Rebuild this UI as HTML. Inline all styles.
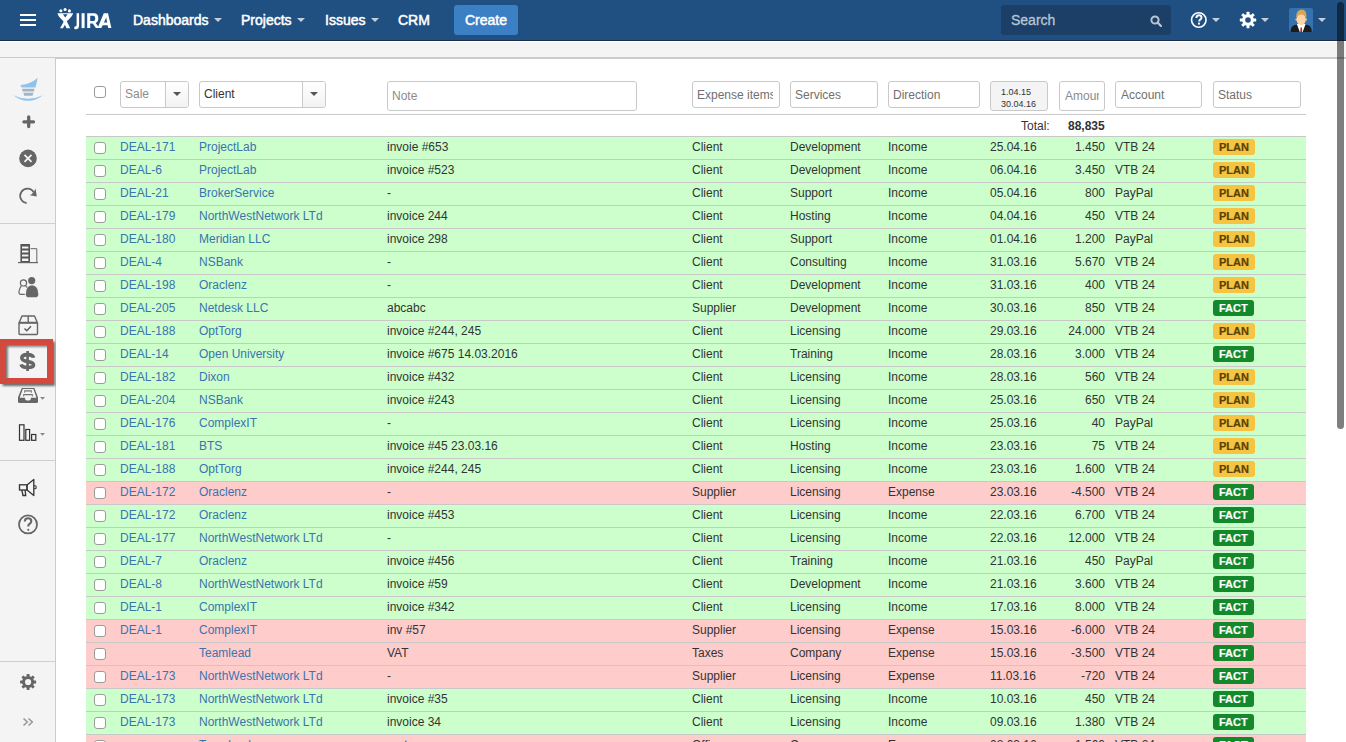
<!DOCTYPE html>
<html><head><meta charset="utf-8"><style>
*{margin:0;padding:0;box-sizing:border-box}
html,body{width:1346px;height:742px;overflow:hidden;background:#fff;font-family:"Liberation Sans",sans-serif;font-size:12px;color:#333}
#hdr{position:absolute;left:0;top:0;width:1346px;height:41px;background:#205081;border-bottom:1px solid #1a2e4a}
#hdr .nav{position:absolute;top:0;height:40px;line-height:40px;color:#fff;font-size:14px;-webkit-text-stroke:0.5px #fff;white-space:nowrap}
#hdr .arr{position:absolute;top:18px;width:0;height:0;border-left:4px solid transparent;border-right:4px solid transparent;border-top:4px solid #c5cfdc}
#create{position:absolute;left:454px;top:5px;width:64px;height:30px;background:#3b7fc4;border-radius:3px;color:#fff;font-size:14px;-webkit-text-stroke:0.5px #fff;line-height:30px;text-align:center}
#search{position:absolute;left:1001px;top:5px;width:170px;height:30px;background:#1c3f67;border-radius:3px}
#search span{position:absolute;left:10px;top:0;line-height:30px;font-size:14px;color:#b9c5d4;-webkit-text-stroke:0.3px #b9c5d4}
#band{position:absolute;left:0;top:41px;width:1346px;height:17px;background:#f4f4f4;border-top:1px solid #fff;border-bottom:1px solid #cbcbcb}
#side{position:absolute;left:0;top:58px;width:56px;height:684px;background:#f4f4f4;border-right:1px solid #cbcbcb}
#side .dv{position:absolute;left:0;width:55px;height:1px;background:#cfcfcf}
#content{position:absolute;left:56px;top:58px;width:1290px;height:684px;background:#fff;border-top:1px solid #cbcbcb}
#content > *{position:absolute}
.cb{display:block;position:absolute;left:8px;top:5px;width:12px;height:12px;border:1px solid #9b9b9b;border-radius:3px;background:#fff}
.hcb{left:38px;top:27px}
.sel,.inp{position:absolute;top:22px;height:27px;border:1px solid #c9c9c9;border-radius:3px;background:#fff;overflow:hidden}
.sel .ph,.inp .ph,.inp .ph2,.sel .val{position:absolute;left:4px;top:5px;font-size:12px;line-height:14px;color:#8c8c8c;white-space:nowrap}
.inp .ph2{top:6px}
.sel .val{color:#333}
.inp .ph2{color:#707070}
.dd{position:absolute;top:0;right:0;bottom:0;border-left:1px solid #c9c9c9;background:linear-gradient(#fff,#f2f2f2)}
.dd i{position:absolute;left:50%;top:10px;margin-left:-4px;width:0;height:0;border-left:4px solid transparent;border-right:4px solid transparent;border-top:4px solid #555}
.date{background:#f4f4f4}
.date span{position:absolute;left:10px;top:4px;font-size:9px;line-height:12px;color:#333}
.fline{left:30px;top:55px;width:1220px;height:1px;background:#c9c9c9}
.tot{left:965px;top:60px;font-size:12px;line-height:14px}
.totv{left:1012px;top:60px;font-size:12px;line-height:14px;font-weight:bold}
.row{position:absolute;left:30px;width:1220px;height:23px;border-top:1px solid #c8c8c8;white-space:nowrap}
.row.g{background:#ccffcc}
.row.r{background:#ffcccc}
.row > a,.row > span{position:absolute;top:0;line-height:20px;font-size:12px}
.row a{color:#3b73af}
.c1{left:34px}.c2{left:113px}.c3{left:301px}.c4{left:606px}.c5{left:704px}.c6{left:802px}.c7{left:904px}
.c8{right:201px;text-align:right}.c9{left:1029px}
.row .lz{position:absolute;left:1127px;top:2px;height:16px;padding:0 6px;border-radius:3px;font-size:11px;font-weight:bold;line-height:16px}
.plan{background:#f6c342;color:#594300;-webkit-text-stroke:0.2px #594300}
.fact{background:#14892c;color:#fff;-webkit-text-stroke:0.2px #fff}
#sb{position:absolute;left:1337px;top:2px;width:7px;height:427px;border-radius:4px;background:rgba(0,0,0,0.5)}

</style></head><body>
<div id="hdr">
<svg style="position:absolute;left:20px;top:14px" width="16" height="12"><rect x="0" y="0" width="16" height="2" fill="#fff"/><rect x="0" y="5" width="16" height="2" fill="#fff"/><rect x="0" y="10" width="16" height="2" fill="#fff"/></svg>
<svg style="position:absolute;left:54px;top:4px" width="62" height="30" viewBox="0 0 62 30">
<g fill="#fff">
<circle cx="6.9" cy="6.8" r="1.55"/><circle cx="11.1" cy="5.5" r="1.55"/><circle cx="15.4" cy="6.9" r="1.55"/>
<path fill-rule="evenodd" d="M3.4 9.3 H19.2 Q18.5 12 15.5 14.8 L11.8 18.2 H10.6 L6.9 14.8 Q3.9 12 3.4 9.3 Z M8.9 10.2 H13.6 L11.25 13.6 Z"/>
<path d="M9.3 16.5 L12.4 16.5 L16.2 24.2 H12.6 L10 19.2 Z"/>
<path d="M13.1 16.5 L10.3 16.8 L6 24.2 H8.9 L11.5 19.8 Z"/>
<path d="M22.6 9.2 H25.1 V21.2 Q25.1 25 21.6 25.2 L20.3 25.1 L20.5 22.6 Q22.6 22.8 22.6 21 Z"/>
<rect x="27.6" y="9.2" width="3" height="14.9"/>
<path fill-rule="evenodd" d="M33.2 9.2 H39.8 Q44.3 9.2 44.3 14.2 Q44.3 17.9 41.6 19 L45.4 24.1 H41.9 L38.7 19.5 H36.2 V24.1 H33.2 Z M36.2 11.8 V17 H39.4 Q41.3 17 41.3 14.4 Q41.3 11.8 39.4 11.8 Z"/>
<path fill-rule="evenodd" d="M49.8 9.2 H54 L57.4 24.1 H54.2 L53.6 21.2 H48.7 L47.3 24.1 H43.6 Z M50 18.6 H53.1 L52.2 13.6 Z"/>
</g></svg>
<div class="nav" style="left:133px">Dashboards</div><i class="arr" style="left:214px"></i>
<div class="nav" style="left:241px">Projects</div><i class="arr" style="left:297px"></i>
<div class="nav" style="left:325px">Issues</div><i class="arr" style="left:371px"></i>
<div class="nav" style="left:398px">CRM</div>
<div id="create">Create</div>
<div id="search"><span>Search</span>
<svg style="position:absolute;left:149px;top:10px" width="12" height="12" viewBox="0 0 12 12"><circle cx="5" cy="5" r="3.6" fill="none" stroke="#b9c5d4" stroke-width="2"/><path d="M7.5 7.5 L11 11" stroke="#b9c5d4" stroke-width="2.2" stroke-linecap="round"/></svg>
</div>
<svg style="position:absolute;left:1190px;top:11px" width="18" height="18" viewBox="0 0 18 18"><circle cx="8.8" cy="9" r="7.25" fill="none" stroke="#fff" stroke-width="1.6"/><path d="M6.4 7 q0 -2.8 2.5 -2.8 q2.6 0 2.6 2.4 q0 1.4 -1.3 2.1 q-0.9 0.5 -0.9 1.4 v0.3" fill="none" stroke="#fff" stroke-width="1.9"/><rect x="8" y="11.6" width="1.9" height="2" fill="#fff"/></svg>
<i class="arr" style="left:1212px"></i>
<svg style="position:absolute;left:1239px;top:11px" width="18" height="18" viewBox="0 0 18 18"><g transform="translate(9,9)" fill="#fff"><circle r="4.35" fill="none" stroke="#fff" stroke-width="3.1"/><rect x="-1.45" y="-8.2" width="2.9" height="4.2" rx="0.5" transform="rotate(0)"/><rect x="-1.45" y="-8.2" width="2.9" height="4.2" rx="0.5" transform="rotate(45)"/><rect x="-1.45" y="-8.2" width="2.9" height="4.2" rx="0.5" transform="rotate(90)"/><rect x="-1.45" y="-8.2" width="2.9" height="4.2" rx="0.5" transform="rotate(135)"/><rect x="-1.45" y="-8.2" width="2.9" height="4.2" rx="0.5" transform="rotate(180)"/><rect x="-1.45" y="-8.2" width="2.9" height="4.2" rx="0.5" transform="rotate(225)"/><rect x="-1.45" y="-8.2" width="2.9" height="4.2" rx="0.5" transform="rotate(270)"/><rect x="-1.45" y="-8.2" width="2.9" height="4.2" rx="0.5" transform="rotate(315)"/></g></svg>
<i class="arr" style="left:1261px"></i>
<svg style="position:absolute;left:1289px;top:8px" width="24" height="24" viewBox="0 0 24 24">
<rect x="0" y="0" width="24" height="24" rx="2" fill="#3572b0"/>
<path d="M9.6 13.5 H14.8 V17 H9.6 Z" fill="#eab47e"/>
<path d="M1.6 24 Q1.6 18.3 5.2 17.2 L9.3 16 H15.1 L19.2 17.2 Q22.8 18.3 22.8 24 Z" fill="#1c1c1c"/>
<path d="M7.8 16 H16.6 L13.6 24 H10.8 Z" fill="#fff"/>
<path d="M11.5 19.6 H12.9 L13.1 24 H11.3 Z" fill="#b51919"/>
<circle cx="7.4" cy="11.6" r="1.1" fill="#f3c08a"/><circle cx="17" cy="11.6" r="1.1" fill="#f3c08a"/>
<ellipse cx="12.2" cy="11.4" rx="4.6" ry="5.7" fill="#fcd6a6"/>
<path d="M7.4 10.8 Q6.6 4.2 9.8 2.4 Q12.4 0.7 15 1.9 Q18.2 3.5 17.1 10.8 Q16.6 6.8 12.3 6.6 Q8 6.8 7.4 10.8 Z" fill="#d8a457"/>
</svg>
<i class="arr" style="left:1318px"></i>
</div>

<div id="band"></div>
<div id="side"></div>
<svg id="sideicons" style="position:absolute;left:0;top:0" width="56" height="742" viewBox="0 0 56 742">
<!-- logo -->
<path d="M20.5 85 Q31 84 37.8 77.8 L35.5 87.5 L21.5 87.5 Z" fill="#8ec3ee"/>
<path d="M22 88.8 h12.5 l-0.6 2.8 h-11.3 z" fill="#a0b4c8"/>
<path d="M23.3 92.8 h10.2 l-1 3 h-8.2 z" fill="#a0b4c8"/>
<path d="M13.3 95.2 Q28 106.3 43 95.2 Q28 102.3 13.3 95.2 Z" fill="#8ec3ee"/>
<!-- plus -->
<path d="M28.7 117 v9.6 M23.9 121.8 h9.6" stroke="#666" stroke-width="3.3" stroke-linecap="round"/>
<!-- x circle -->
<circle cx="28" cy="158.4" r="8.8" fill="#666"/>
<path d="M24.5 154.9 l7 7 M31.5 154.9 l-7 7" stroke="#f4f4f4" stroke-width="1.8"/>
<!-- refresh -->
<path d="M26.6 203 A7.2 7.2 0 1 1 33.6 192.2" fill="none" stroke="#666" stroke-width="1.8"/>
<path d="M29.8 195.3 Q33.6 193.8 35.5 188.6 L36.8 196.6 Z" fill="#666"/>
<!-- dividers -->
<rect x="0" y="223" width="55" height="1" fill="#cfcfcf"/>
<rect x="0" y="460" width="55" height="1" fill="#cfcfcf"/>
<rect x="0" y="661" width="55" height="1" fill="#cfcfcf"/>
<!-- building -->
<rect x="20.4" y="244" width="9.6" height="18.5" fill="#555"/>
<rect x="22" y="246.5" width="6.4" height="2" fill="#f4f4f4"/>
<rect x="22" y="250.5" width="6.4" height="2" fill="#f4f4f4"/>
<rect x="22" y="254.5" width="6.4" height="2" fill="#f4f4f4"/>
<rect x="22" y="258.5" width="6.4" height="2.5" fill="#f4f4f4"/>
<path d="M30.5 248.7 h6.3 v13.5" fill="none" stroke="#666" stroke-width="1"/>
<rect x="18" y="262" width="20" height="1.2" fill="#666"/>
<!-- persons -->
<circle cx="23.5" cy="282.9" r="3.1" fill="none" stroke="#666" stroke-width="1.2"/>
<path d="M21.2 286.2 Q19.6 288.4 19 291.3 Q18.6 294.3 21 294.3 H24.8" fill="none" stroke="#666" stroke-width="1.2"/>
<path d="M25.8 286 Q26.3 286.9 27.3 287.4" fill="none" stroke="#666" stroke-width="1.2"/>
<circle cx="31.7" cy="280.6" r="3.6" fill="#666"/>
<path d="M25.8 294.2 Q25.9 285.6 32 285.2 Q38.2 285.6 38.3 294.2 Q38.3 297.3 35.4 297.3 H28.7 Q25.8 297.3 25.8 294.2 Z" fill="#666"/>
<!-- box -->
<path d="M19 323 L22 316 H34.5 L37.5 323 Z M28.2 316 V323" fill="none" stroke="#666" stroke-width="1.4" stroke-linejoin="round"/>
<rect x="19" y="322.5" width="18.5" height="12" rx="1" fill="none" stroke="#666" stroke-width="1.4"/>
<path d="M24.5 328.5 l2.3 2.3 l4.2 -4.5" fill="none" stroke="#555" stroke-width="1.3"/>
<!-- highlight -->
<defs><filter id="sh" x="-20%" y="-20%" width="150%" height="150%"><feGaussianBlur stdDeviation="1.1"/></filter>
<filter id="sh2" x="-20%" y="-20%" width="150%" height="150%"><feGaussianBlur stdDeviation="0.8"/></filter></defs>
<rect x="2.5" y="341.5" width="52.5" height="44.5" fill="#555" opacity="0.85" filter="url(#sh)"/>
<rect x="0" y="339" width="53" height="45" fill="#d24a3d"/>
<rect x="6" y="345" width="41" height="33" fill="#f4f4f4"/>
<clipPath id="inr"><rect x="6" y="345" width="41" height="33"/></clipPath>
<g clip-path="url(#inr)"><path d="M3 342 h46 v4.8 h-41.2 v34 h-4.8 z" fill="#666" opacity="0.9" filter="url(#sh2)"/></g>
<path d="M33.5 357.8 C33.1 355.6 31 354.6 27.6 354.6 C24.1 354.6 21.8 355.9 21.8 358.1 C21.8 360.5 24.6 361.1 27.6 361.6 C30.8 362.1 33.5 362.8 33.5 364.9 C33.5 366.9 31.2 367.4 27.6 367.4 C23.9 367.4 21.6 366.4 21.2 364.3" fill="none" stroke="#666" stroke-width="3.6"/>
<rect x="26.3" y="351" width="2.6" height="20" fill="#666"/>
<!-- tray -->
<path d="M21.8 388 H34.4 L38 397.3 V401.5 Q38 403 36.5 403 H19.5 Q18 403 18 401.5 V397.3 Z" fill="#666"/>
<path d="M22.8 389.1 H33.4 L36.5 397.8 H30.9 V398.6 Q30.9 400.6 28.9 400.6 H27 Q25 400.6 25 398.6 V397.8 H19.7 Z" fill="#f4f4f4"/>
<path d="M24.2 392.7 V390.3 H31.8 V392.7 H30.9 V391.4 H25.1 V392.7 Z" fill="#707070"/>
<path d="M23.2 396.6 V394 H32.8 V396.6 H31.9 V395.2 H24.1 V396.6 Z" fill="#707070"/>
<path d="M40 397 h5 l-2.5 2.8 z" fill="#888"/>
<!-- bars -->
<rect x="19.5" y="424.8" width="4.5" height="15.5" fill="none" stroke="#333" stroke-width="1.2"/>
<rect x="25.8" y="429.5" width="3.8" height="10.8" fill="none" stroke="#333" stroke-width="1.2"/>
<rect x="31.6" y="434.5" width="4.2" height="5.8" fill="none" stroke="#333" stroke-width="1.2"/>
<path d="M40 433 h5 l-2.5 2.8 z" fill="#888"/>
<!-- megaphone -->
<path d="M27 485 L33.8 479.5 V495.5 L27 490 Z" fill="none" stroke="#333" stroke-width="1.3" stroke-linejoin="round"/>
<rect x="19.5" y="484.8" width="7.5" height="5.2" fill="none" stroke="#333" stroke-width="1.3"/>
<path d="M21.8 490 L23 495.5 H25.7 L25.1 490" fill="none" stroke="#333" stroke-width="1.3"/>
<path d="M34 485.8 h1.3 q0.8 0 0.8 1 v1 q0 1 -0.8 1 h-1.3" fill="none" stroke="#333" stroke-width="1.1"/>
<!-- help -->
<circle cx="28" cy="524.4" r="9" fill="none" stroke="#666" stroke-width="1.8"/>
<path d="M24.8 521.6 q0 -3.3 3.3 -3.3 q3.2 0 3.2 3 q0 1.7 -1.8 2.7 q-1.2 0.7 -1.2 2.1 v0.4" fill="none" stroke="#666" stroke-width="2.1"/>
<circle cx="28.3" cy="529.8" r="1.1" fill="#666"/>
<!-- gear -->
<g transform="translate(28.1,682)" fill="#666"><circle r="4.6" fill="none" stroke="#666" stroke-width="3"/><rect x="-1.45" y="-8.05" width="2.9" height="4" rx="0.5" transform="rotate(0)"/><rect x="-1.45" y="-8.05" width="2.9" height="4" rx="0.5" transform="rotate(45)"/><rect x="-1.45" y="-8.05" width="2.9" height="4" rx="0.5" transform="rotate(90)"/><rect x="-1.45" y="-8.05" width="2.9" height="4" rx="0.5" transform="rotate(135)"/><rect x="-1.45" y="-8.05" width="2.9" height="4" rx="0.5" transform="rotate(180)"/><rect x="-1.45" y="-8.05" width="2.9" height="4" rx="0.5" transform="rotate(225)"/><rect x="-1.45" y="-8.05" width="2.9" height="4" rx="0.5" transform="rotate(270)"/><rect x="-1.45" y="-8.05" width="2.9" height="4" rx="0.5" transform="rotate(315)"/></g>
<!-- chevrons -->
<path d="M23.5 718.5 l3.8 3.5 l-3.8 3.5 M28.5 718.5 l3.8 3.5 l-3.8 3.5" fill="none" stroke="#999" stroke-width="1.6"/>
</svg>

<div id="content">

<i class="cb hcb"></i>
<div class="sel" style="left:64px;width:69px"><span class="ph">Sale</span><b class="dd" style="left:44px"><i></i></b></div>
<div class="sel" style="left:143px;width:127px"><span class="val">Client</span><b class="dd" style="left:102px"><i></i></b></div>
<div class="inp" style="left:331px;width:250px;height:30px"><span class="ph" style="top:7px">Note</span></div>
<div class="inp" style="left:636px;width:88px"><span class="ph2" style="width:76px;overflow:hidden">Expense items</span></div>
<div class="inp" style="left:734px;width:88px"><span class="ph2">Services</span></div>
<div class="inp" style="left:832px;width:92px"><span class="ph2">Direction</span></div>
<div class="inp date" style="left:934px;width:58px;height:30px"><span>1.04.15<br>30.04.16</span></div>
<div class="inp" style="left:1003px;width:46px;height:30px"><span class="ph" style="top:7px;left:5px;width:34px;overflow:hidden">Amount</span></div>
<div class="inp" style="left:1059px;width:87px"><span class="ph2" style="left:5px">Account</span></div>
<div class="inp" style="left:1157px;width:88px"><span class="ph2">Status</span></div>
<div class="fline"></div>
<div class="tot">Total:</div><div class="totv">88,835</div>

<div class="row g" style="top:77px"><i class="cb"></i><a class="c1">DEAL-171</a><a class="c2">ProjectLab</a><span class="c3">invoie #653</span><span class="c4">Client</span><span class="c5">Development</span><span class="c6">Income</span><span class="c7">25.04.16</span><span class="c8">1.450</span><span class="c9">VTB 24</span><span class="lz plan">PLAN</span></div>
<div class="row g" style="top:100px"><i class="cb"></i><a class="c1">DEAL-6</a><a class="c2">ProjectLab</a><span class="c3">invoice #523</span><span class="c4">Client</span><span class="c5">Development</span><span class="c6">Income</span><span class="c7">06.04.16</span><span class="c8">3.450</span><span class="c9">VTB 24</span><span class="lz plan">PLAN</span></div>
<div class="row g" style="top:123px"><i class="cb"></i><a class="c1">DEAL-21</a><a class="c2">BrokerService</a><span class="c3">-</span><span class="c4">Client</span><span class="c5">Support</span><span class="c6">Income</span><span class="c7">05.04.16</span><span class="c8">800</span><span class="c9">PayPal</span><span class="lz plan">PLAN</span></div>
<div class="row g" style="top:146px"><i class="cb"></i><a class="c1">DEAL-179</a><a class="c2">NorthWestNetwork LTd</a><span class="c3">invoice 244</span><span class="c4">Client</span><span class="c5">Hosting</span><span class="c6">Income</span><span class="c7">04.04.16</span><span class="c8">450</span><span class="c9">VTB 24</span><span class="lz plan">PLAN</span></div>
<div class="row g" style="top:169px"><i class="cb"></i><a class="c1">DEAL-180</a><a class="c2">Meridian LLC</a><span class="c3">invoice 298</span><span class="c4">Client</span><span class="c5">Support</span><span class="c6">Income</span><span class="c7">01.04.16</span><span class="c8">1.200</span><span class="c9">PayPal</span><span class="lz plan">PLAN</span></div>
<div class="row g" style="top:192px"><i class="cb"></i><a class="c1">DEAL-4</a><a class="c2">NSBank</a><span class="c3">-</span><span class="c4">Client</span><span class="c5">Consulting</span><span class="c6">Income</span><span class="c7">31.03.16</span><span class="c8">5.670</span><span class="c9">VTB 24</span><span class="lz plan">PLAN</span></div>
<div class="row g" style="top:215px"><i class="cb"></i><a class="c1">DEAL-198</a><a class="c2">Oraclenz</a><span class="c3">-</span><span class="c4">Client</span><span class="c5">Development</span><span class="c6">Income</span><span class="c7">31.03.16</span><span class="c8">400</span><span class="c9">VTB 24</span><span class="lz plan">PLAN</span></div>
<div class="row g" style="top:238px"><i class="cb"></i><a class="c1">DEAL-205</a><a class="c2">Netdesk LLC</a><span class="c3">abcabc</span><span class="c4">Supplier</span><span class="c5">Development</span><span class="c6">Income</span><span class="c7">30.03.16</span><span class="c8">850</span><span class="c9">VTB 24</span><span class="lz fact">FACT</span></div>
<div class="row g" style="top:261px"><i class="cb"></i><a class="c1">DEAL-188</a><a class="c2">OptTorg</a><span class="c3">invoice #244, 245</span><span class="c4">Client</span><span class="c5">Licensing</span><span class="c6">Income</span><span class="c7">29.03.16</span><span class="c8">24.000</span><span class="c9">VTB 24</span><span class="lz plan">PLAN</span></div>
<div class="row g" style="top:284px"><i class="cb"></i><a class="c1">DEAL-14</a><a class="c2">Open University</a><span class="c3">invoice #675 14.03.2016</span><span class="c4">Client</span><span class="c5">Training</span><span class="c6">Income</span><span class="c7">28.03.16</span><span class="c8">3.000</span><span class="c9">VTB 24</span><span class="lz fact">FACT</span></div>
<div class="row g" style="top:307px"><i class="cb"></i><a class="c1">DEAL-182</a><a class="c2">Dixon</a><span class="c3">invoice #432</span><span class="c4">Client</span><span class="c5">Licensing</span><span class="c6">Income</span><span class="c7">28.03.16</span><span class="c8">560</span><span class="c9">VTB 24</span><span class="lz plan">PLAN</span></div>
<div class="row g" style="top:330px"><i class="cb"></i><a class="c1">DEAL-204</a><a class="c2">NSBank</a><span class="c3">invoice #243</span><span class="c4">Client</span><span class="c5">Licensing</span><span class="c6">Income</span><span class="c7">25.03.16</span><span class="c8">650</span><span class="c9">VTB 24</span><span class="lz plan">PLAN</span></div>
<div class="row g" style="top:353px"><i class="cb"></i><a class="c1">DEAL-176</a><a class="c2">ComplexIT</a><span class="c3">-</span><span class="c4">Client</span><span class="c5">Licensing</span><span class="c6">Income</span><span class="c7">25.03.16</span><span class="c8">40</span><span class="c9">PayPal</span><span class="lz plan">PLAN</span></div>
<div class="row g" style="top:376px"><i class="cb"></i><a class="c1">DEAL-181</a><a class="c2">BTS</a><span class="c3">invoice #45 23.03.16</span><span class="c4">Client</span><span class="c5">Hosting</span><span class="c6">Income</span><span class="c7">23.03.16</span><span class="c8">75</span><span class="c9">VTB 24</span><span class="lz plan">PLAN</span></div>
<div class="row g" style="top:399px"><i class="cb"></i><a class="c1">DEAL-188</a><a class="c2">OptTorg</a><span class="c3">invoice #244, 245</span><span class="c4">Client</span><span class="c5">Licensing</span><span class="c6">Income</span><span class="c7">23.03.16</span><span class="c8">1.600</span><span class="c9">VTB 24</span><span class="lz plan">PLAN</span></div>
<div class="row r" style="top:422px"><i class="cb"></i><a class="c1">DEAL-172</a><a class="c2">Oraclenz</a><span class="c3">-</span><span class="c4">Supplier</span><span class="c5">Licensing</span><span class="c6">Expense</span><span class="c7">23.03.16</span><span class="c8">-4.500</span><span class="c9">VTB 24</span><span class="lz fact">FACT</span></div>
<div class="row g" style="top:445px"><i class="cb"></i><a class="c1">DEAL-172</a><a class="c2">Oraclenz</a><span class="c3">invoice #453</span><span class="c4">Client</span><span class="c5">Licensing</span><span class="c6">Income</span><span class="c7">22.03.16</span><span class="c8">6.700</span><span class="c9">VTB 24</span><span class="lz fact">FACT</span></div>
<div class="row g" style="top:468px"><i class="cb"></i><a class="c1">DEAL-177</a><a class="c2">NorthWestNetwork LTd</a><span class="c3">-</span><span class="c4">Client</span><span class="c5">Licensing</span><span class="c6">Income</span><span class="c7">22.03.16</span><span class="c8">12.000</span><span class="c9">VTB 24</span><span class="lz fact">FACT</span></div>
<div class="row g" style="top:491px"><i class="cb"></i><a class="c1">DEAL-7</a><a class="c2">Oraclenz</a><span class="c3">invoice #456</span><span class="c4">Client</span><span class="c5">Training</span><span class="c6">Income</span><span class="c7">21.03.16</span><span class="c8">450</span><span class="c9">PayPal</span><span class="lz fact">FACT</span></div>
<div class="row g" style="top:514px"><i class="cb"></i><a class="c1">DEAL-8</a><a class="c2">NorthWestNetwork LTd</a><span class="c3">invoice #59</span><span class="c4">Client</span><span class="c5">Development</span><span class="c6">Income</span><span class="c7">21.03.16</span><span class="c8">3.600</span><span class="c9">VTB 24</span><span class="lz fact">FACT</span></div>
<div class="row g" style="top:537px"><i class="cb"></i><a class="c1">DEAL-1</a><a class="c2">ComplexIT</a><span class="c3">invoice #342</span><span class="c4">Client</span><span class="c5">Licensing</span><span class="c6">Income</span><span class="c7">17.03.16</span><span class="c8">8.000</span><span class="c9">VTB 24</span><span class="lz fact">FACT</span></div>
<div class="row r" style="top:560px"><i class="cb"></i><a class="c1">DEAL-1</a><a class="c2">ComplexIT</a><span class="c3">inv #57</span><span class="c4">Supplier</span><span class="c5">Licensing</span><span class="c6">Expense</span><span class="c7">15.03.16</span><span class="c8">-6.000</span><span class="c9">VTB 24</span><span class="lz fact">FACT</span></div>
<div class="row r" style="top:583px"><i class="cb"></i><a class="c1"></a><a class="c2">Teamlead</a><span class="c3">VAT</span><span class="c4">Taxes</span><span class="c5">Company</span><span class="c6">Expense</span><span class="c7">15.03.16</span><span class="c8">-3.500</span><span class="c9">VTB 24</span><span class="lz fact">FACT</span></div>
<div class="row r" style="top:606px"><i class="cb"></i><a class="c1">DEAL-173</a><a class="c2">NorthWestNetwork LTd</a><span class="c3">-</span><span class="c4">Supplier</span><span class="c5">Licensing</span><span class="c6">Expense</span><span class="c7">11.03.16</span><span class="c8">-720</span><span class="c9">VTB 24</span><span class="lz fact">FACT</span></div>
<div class="row g" style="top:629px"><i class="cb"></i><a class="c1">DEAL-173</a><a class="c2">NorthWestNetwork LTd</a><span class="c3">invoice #35</span><span class="c4">Client</span><span class="c5">Licensing</span><span class="c6">Income</span><span class="c7">10.03.16</span><span class="c8">450</span><span class="c9">VTB 24</span><span class="lz fact">FACT</span></div>
<div class="row g" style="top:652px"><i class="cb"></i><a class="c1">DEAL-173</a><a class="c2">NorthWestNetwork LTd</a><span class="c3">invoice 34</span><span class="c4">Client</span><span class="c5">Licensing</span><span class="c6">Income</span><span class="c7">09.03.16</span><span class="c8">1.380</span><span class="c9">VTB 24</span><span class="lz fact">FACT</span></div>
<div class="row r" style="top:675px"><i class="cb"></i><a class="c1"></a><a class="c2">Teamlead</a><span class="c3">rent</span><span class="c4">Office</span><span class="c5">Company</span><span class="c6">Expense</span><span class="c7">08.03.16</span><span class="c8">-1.500</span><span class="c9">VTB 24</span><span class="lz fact">FACT</span></div>
</div>
<div id="sb"></div>
</body></html>
